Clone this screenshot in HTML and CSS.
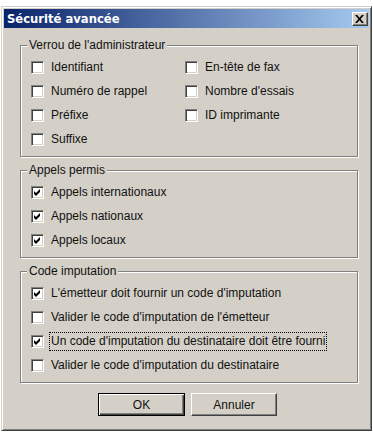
FILE: index.html
```html
<!DOCTYPE html>
<html lang="fr">
<head>
<meta charset="utf-8">
<title>Sécurité avancée</title>
<link rel="stylesheet" href="styles.css">
</head>
<body>
<div class="window">
  <div class="titlebar">
    <span class="title">Sécurité avancée</span>
    <span class="close"><svg width="9" height="8" viewBox="0 0 9 8"><path d="M0 0h2.2l2.3 2.8L6.8 0H9L5.6 4 9 8H6.8L4.5 5.2 2.2 8H0l3.4-4z" fill="#000"/></svg></span>
  </div>
  <div class="body">
    <fieldset class="group">
      <legend>Verrou de l'administrateur</legend>
      <div class="grid2">
        <label class="cb"><span class="box"></span><span class="txt">Identifiant</span></label>
        <label class="cb"><span class="box"></span><span class="txt">En-tête de fax</span></label>
        <label class="cb"><span class="box"></span><span class="txt">Numéro de rappel</span></label>
        <label class="cb"><span class="box"></span><span class="txt">Nombre d'essais</span></label>
        <label class="cb"><span class="box"></span><span class="txt">Préfixe</span></label>
        <label class="cb"><span class="box"></span><span class="txt">ID imprimante</span></label>
        <label class="cb"><span class="box"></span><span class="txt">Suffixe</span></label>
      </div>
    </fieldset>
    <fieldset class="group">
      <legend>Appels permis</legend>
      <label class="cb"><span class="box"><svg class="chk" width="9" height="9" viewBox="2 2 9 9"><path d="M3 5l2 2 4-4v3l-4 4-2-2z" fill="#000"/></svg></span><span class="txt">Appels internationaux</span></label>
      <label class="cb"><span class="box"><svg class="chk" width="9" height="9" viewBox="2 2 9 9"><path d="M3 5l2 2 4-4v3l-4 4-2-2z" fill="#000"/></svg></span><span class="txt">Appels nationaux</span></label>
      <label class="cb"><span class="box"><svg class="chk" width="9" height="9" viewBox="2 2 9 9"><path d="M3 5l2 2 4-4v3l-4 4-2-2z" fill="#000"/></svg></span><span class="txt">Appels locaux</span></label>
    </fieldset>
    <fieldset class="group">
      <legend>Code imputation</legend>
      <label class="cb"><span class="box"><svg class="chk" width="9" height="9" viewBox="2 2 9 9"><path d="M3 5l2 2 4-4v3l-4 4-2-2z" fill="#000"/></svg></span><span class="txt">L'émetteur doit fournir un code d'imputation</span></label>
      <label class="cb"><span class="box"></span><span class="txt">Valider le code d'imputation de l'émetteur</span></label>
      <label class="cb"><span class="box"><svg class="chk" width="9" height="9" viewBox="2 2 9 9"><path d="M3 5l2 2 4-4v3l-4 4-2-2z" fill="#000"/></svg></span><span class="txt focus">Un code d'imputation du destinataire doit être fourni</span></label>
      <label class="cb"><span class="box"></span><span class="txt">Valider le code d'imputation du destinataire</span></label>
    </fieldset>
    <div class="buttons">
      <button class="btn default">OK</button>
      <button class="btn">Annuler</button>
    </div>
  </div>
</div>
</body>
</html>
```
FILE: styles.css
```css
html, body {
  margin: 0;
  padding: 0;
  background: #ffffff;
}
.window {
  margin: 6px 1px 3px 1px;
  height: 425px;
  box-sizing: border-box;
  background: #d4d0c8;
  border: 1px solid;
  border-color: #d4d0c8 #404040 #404040 #d4d0c8;
  box-shadow: inset 1px 1px 0 #ffffff, inset -1px -1px 0 #808080;
  padding: 2px;
  font-family: "Liberation Sans", Arial, sans-serif;
  font-size: 12px;
  color: #111;
}
.titlebar {
  height: 19px;
  display: flex;
  align-items: center;
  justify-content: space-between;
  background: linear-gradient(to right, #0a246a, #a6caf0);
  padding: 0 1px 0 3px;
}
.title {
  font-family: "DejaVu Sans", Verdana, sans-serif;
  font-weight: bold;
  font-size: 11.6px;
  color: #ffffff;
  line-height: 14px;
}
.close {
  width: 16px;
  height: 14px;
  box-sizing: border-box;
  background: #d4d0c8;
  border: 1px solid;
  border-color: #ffffff #404040 #404040 #ffffff;
  box-shadow: inset -1px -1px 0 #808080;
  display: flex;
  align-items: center;
  justify-content: center;
  padding: 0 1px 1px 0;
  margin-top: 1px;
}
.close svg { display: block; }
.body {
  padding-top: 10px;
}
.group {
  margin: 0 0 6px 16px;
  width: 338px;
  box-sizing: border-box;
  border: 1px solid #808080;
  box-shadow: inset 1px 1px 0 #ffffff, 1px 1px 0 #ffffff;
  padding: 3px 4px 5px 10px;
  min-width: 0;
}
.group legend {
  padding: 0 2px;
  margin-left: -4px;
  line-height: 14px;
  background: #d4d0c8;
}
.grid2 {
  display: grid;
  grid-template-columns: 154px 1fr;
}
.cb {
  display: flex;
  align-items: center;
  height: 24px;
}
.box {
  width: 13px;
  height: 13px;
  box-sizing: border-box;
  flex: none;
  background: #ffffff;
  border: 1px solid;
  border-color: #808080 #ffffff #ffffff #808080;
  box-shadow: inset 1px 1px 0 #404040, inset -1px -1px 0 #d4d0c8;
  padding: 1px;
  margin-right: 7px;
}
.chk { display: block; }
.txt {
  line-height: 14px;
  white-space: nowrap;
}
.txt.focus {
  border: 1px dotted #000;
  margin-left: -2px;
  padding: 1px 1px 2px 1px;
}
.buttons {
  display: flex;
  gap: 6px;
  margin: 10px 0 0 94px;
}
.btn {
  width: 87px;
  height: 23px;
  box-sizing: border-box;
  margin: 0;
  padding: 0;
  background: #d4d0c8;
  font-family: "Liberation Sans", Arial, sans-serif;
  font-size: 12px;
  color: #111;
  border: 1px solid;
  border-color: #ffffff #404040 #404040 #ffffff;
  box-shadow: inset -1px -1px 0 #808080;
}
.btn.default {
  border: 1px solid #000;
  box-shadow: inset 1px 1px 0 #ffffff, inset -1px -1px 0 #404040, inset -2px -2px 0 #808080;
}
.btn + .btn { width: 86px; }
```
